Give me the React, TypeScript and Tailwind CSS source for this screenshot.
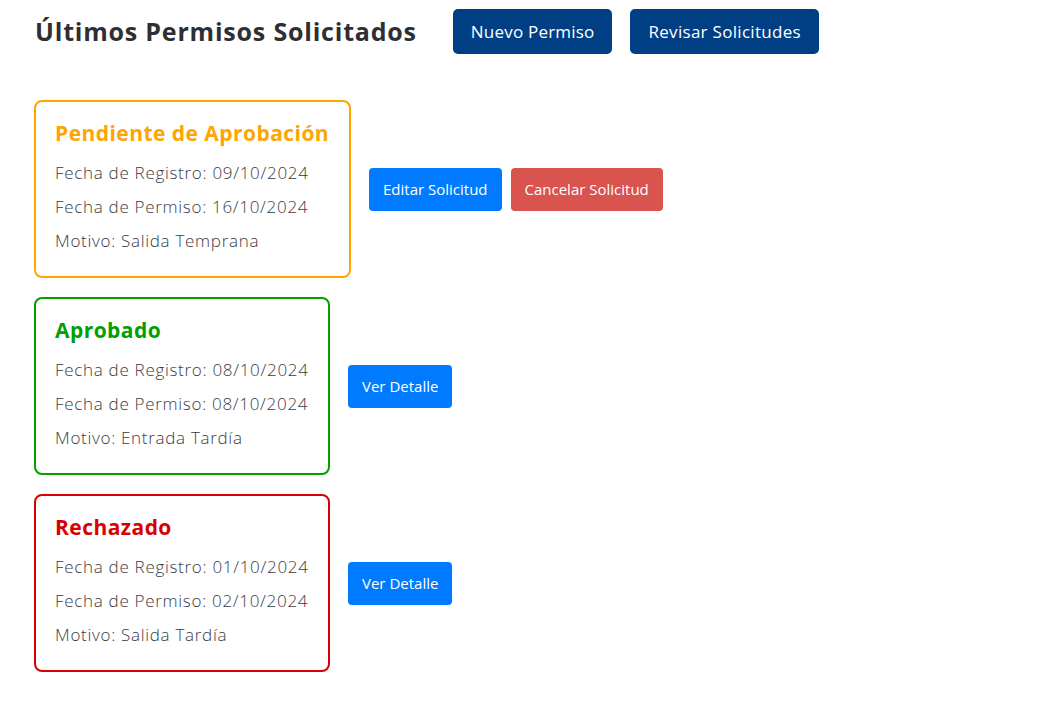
import React from "react";

type Item = {
  status: string;
  color: string;
  border: string;
  width: string;
  registro: string;
  permiso: string;
  motivo: string;
  pending?: boolean;
};

const items: Item[] = [
  {
    status: "Pendiente de Aprobación",
    color: "text-[#ffa500]",
    border: "border-[#ffa500]",
    width: "w-[317px]",
    registro: "09/10/2024",
    permiso: "16/10/2024",
    motivo: "Salida Temprana",
    pending: true,
  },
  {
    status: "Aprobado",
    color: "text-[#00a000]",
    border: "border-[#00a000]",
    width: "w-[296px]",
    registro: "08/10/2024",
    permiso: "08/10/2024",
    motivo: "Entrada Tardía",
  },
  {
    status: "Rechazado",
    color: "text-[#d90000]",
    border: "border-[#d90000]",
    width: "w-[296px]",
    registro: "01/10/2024",
    permiso: "02/10/2024",
    motivo: "Salida Tardía",
  },
];

function SmallButton({ label, className }: { label: string; className: string }) {
  return (
    <button
      className={`h-[43px] rounded-[4px] px-[14px] text-[15px] text-white font-['Open_Sans',sans-serif] ${className}`}
    >
      {label}
    </button>
  );
}

export default function App() {
  return (
    <div className="min-h-[702px] bg-white pl-[34px] pt-[9px] font-['Open_Sans',sans-serif]">
      <div className="flex items-center">
        <h1 className="text-[25px] font-bold text-[#2f2f33] tracking-[0.8px] pl-[1px]">
          Últimos Permisos Solicitados
        </h1>
        <div className="ml-[36px] flex gap-[18px]">
          <button className="h-[45px] rounded-[5px] bg-[#003f84] px-[18px] text-[17px] text-white tracking-[0.2px]">
            Nuevo Permiso
          </button>
          <button className="h-[45px] rounded-[5px] bg-[#003f84] px-[18px] text-[17px] text-white tracking-[0.3px]">
            Revisar Solicitudes
          </button>
        </div>
      </div>

      <div className="mt-[46px] flex flex-col gap-[19px]">
        {items.map((it) => (
          <div key={it.status} className="flex items-center gap-[18px]">
            <div
              className={`${it.width} h-[178px] shrink-0 whitespace-nowrap rounded-[8px] border-2 ${it.border} pl-[19px] pt-[17px]`}
            >
              <h2 className={`text-[21px] leading-[28px] font-bold tracking-[0.45px] ${it.color}`}>{it.status}</h2>
              <div className="mt-[14px] flex flex-col gap-[10px] text-[17px] leading-[24px] tracking-[0.7px] text-[#3a3a42] font-light">
                <p>Fecha de Registro: {it.registro}</p>
                <p>Fecha de Permiso: {it.permiso}</p>
                <p>Motivo: {it.motivo}</p>
              </div>
            </div>
            {it.pending ? (
              <div className="flex gap-[9px]">
                <SmallButton label="Editar Solicitud" className="bg-[#007bff]" />
                <SmallButton label="Cancelar Solicitud" className="bg-[#d9534f]" />
              </div>
            ) : (
              <SmallButton label="Ver Detalle" className="bg-[#007bff]" />
            )}
          </div>
        ))}
      </div>
    </div>
  );
}
